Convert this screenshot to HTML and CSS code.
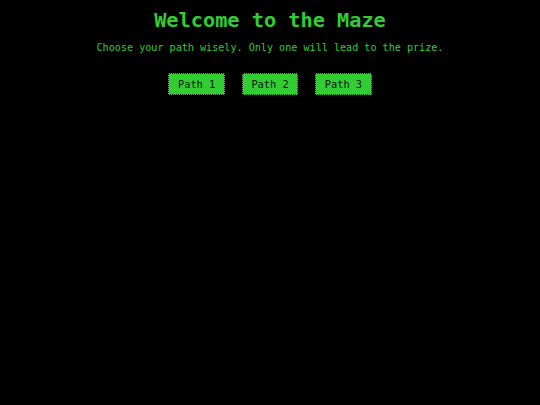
FILE: index.html
```html
<!DOCTYPE html>
<html>
<head>
<meta charset="utf-8">
<link rel="stylesheet" href="styles.css">
</head>
<body>
<div class="page">
  <h1 class="title">Welcome to the Maze</h1>
  <p class="subtitle">Choose your path wisely. Only one will lead to the prize.</p>
  <div class="paths">
    <button class="path">Path 1</button>
    <button class="path">Path 2</button>
    <button class="path">Path 3</button>
  </div>
</div>
</body>
</html>
```

FILE: styles.css
```css
html, body {
  margin: 0;
  padding: 0;
  background: #000;
}
.page {
  font-family: "DejaVu Sans Mono", monospace;
  color: #32cd32;
  font-size: 10.125px;
  text-align: center;
  padding-top: 8px;
}
.title {
  font-size: 20.25px;
  font-weight: bold;
  margin: 0 0 10px 0;
  line-height: 24px;
}
.subtitle {
  margin: 0 0 19px 0;
  line-height: 12px;
}
.paths {
  display: flex;
  justify-content: center;
  gap: 17px;
}
.path {
  font-family: "DejaVu Sans Mono", monospace;
  font-size: 10.3px;
  background: #32cd32;
  color: #062006;
  border: 1px dotted #042004;
  padding: 0 8.6px;
  white-space: nowrap;
  height: 22px;
  margin: 0;
  cursor: pointer;
}
```
